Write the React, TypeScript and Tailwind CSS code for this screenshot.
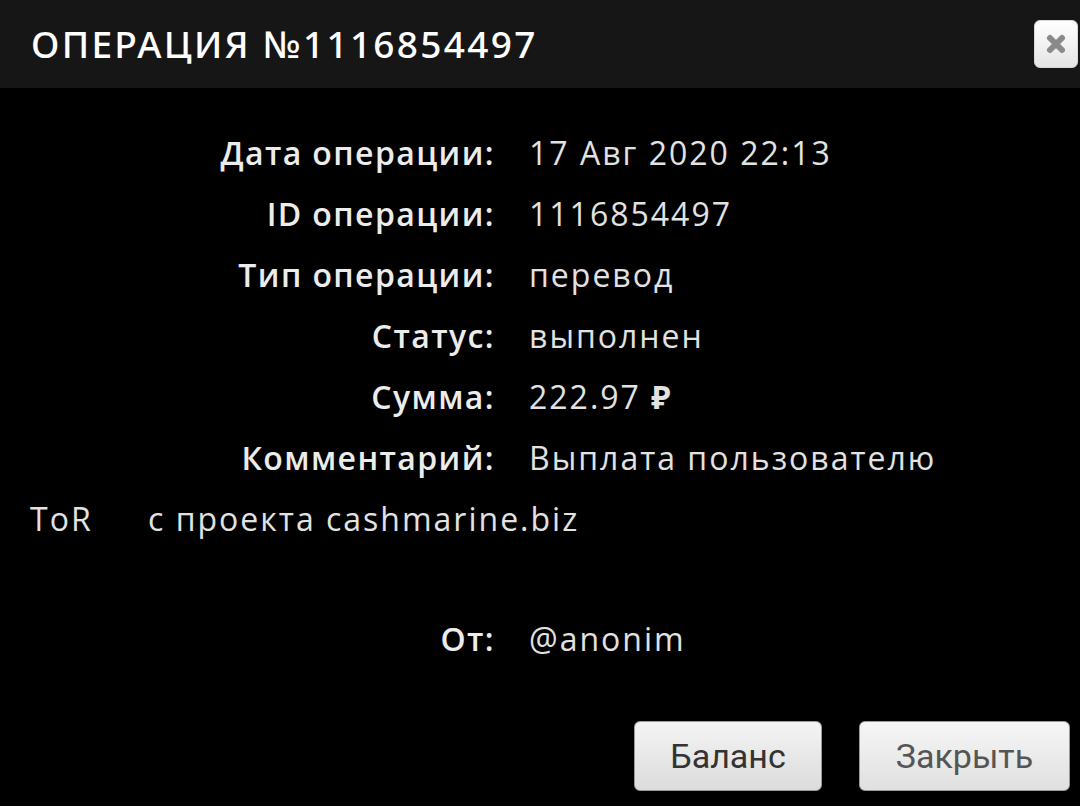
import React from "react";

const rows: [string, React.ReactNode][] = [
  ["Дата операции:", "17 Авг 2020 22:13"],
  ["ID операции:", "1116854497"],
  ["Тип операции:", "перевод"],
  ["Статус:", "выполнен"],
  ["Сумма:", <>222.97 <span className="font-bold">₽</span></>],
  ["Комментарий:", "Выплата пользователю"],
];

export default function App() {
  return (
    <div className="w-[1080px] h-[806px] bg-black overflow-hidden" style={{ fontFamily: '"Open Sans", "Noto Sans", sans-serif' }}>
      <div className="h-[88px] bg-[#161616] flex items-center justify-between pl-[31px] pr-[2px]">
        <div className="text-white text-[37px] tracking-[2.3px] font-medium" style={{ fontFamily: '"Noto Sans", sans-serif' }}>
          ОПЕРАЦИЯ №1116854497
        </div>
        <div className="w-[44px] h-[48px] rounded-[6px] border border-[#d8d8d8] bg-gradient-to-b from-[#ffffff] to-[#e4e4e4] flex items-center justify-center">
          <svg width="22" height="22" viewBox="0 0 22 22">
            <path d="M5 5 L17 17 M17 5 L5 17" stroke="#8a8a8a" strokeWidth="6" strokeLinecap="round" />
          </svg>
        </div>
      </div>
      <div className="pt-[34px]">
        {rows.map(([l, v]) => (
          <div key={l} className="flex h-[61px] items-center">
            <div className="w-[495px] text-right text-[32px] tracking-[1.4px] font-semibold text-[#ececec]">{l}</div>
            <div className="ml-[34px] text-[32px] tracking-[2px] text-[#e2e2e2]">{v}</div>
          </div>
        ))}
        <div className="flex h-[61px] items-center">
          <div className="ml-[30px] w-[118px] text-[32px] tracking-[2px] text-[#e2e2e2]">ToR</div>
          <div className="text-[32px] tracking-[2px] text-[#e2e2e2]">с проекта cashmarine.biz</div>
        </div>
        <div className="h-[59px]" />
        <div className="flex h-[61px] items-center">
          <div className="w-[495px] text-right text-[32px] tracking-[1.4px] font-semibold text-[#ececec]">От:</div>
          <div className="ml-[34px] text-[32px] tracking-[2px] text-[#e2e2e2]">@anonim</div>
        </div>
      </div>
      <div className="flex justify-end gap-[37px] pr-[10px] mt-[52px]" style={{ fontFamily: 'Roboto, sans-serif' }}>
        <button className="w-[188px] h-[70px] rounded-[6px] border border-[#9a9a9a] bg-gradient-to-b from-[#f4f4f4] to-[#dcdcdc] text-[34px] text-[#333]">
          Баланс
        </button>
        <button className="w-[211px] h-[70px] rounded-[6px] border border-[#9a9a9a] bg-gradient-to-b from-[#f6f6f6] to-[#e0e0e0] text-[34px] text-[#555]">
          Закрыть
        </button>
      </div>
    </div>
  );
}
